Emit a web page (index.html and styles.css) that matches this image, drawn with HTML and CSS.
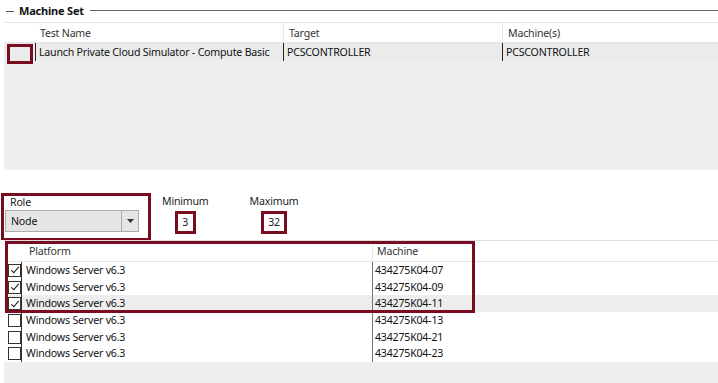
FILE: index.html
```html
<!DOCTYPE html>
<html>
<head>
<meta charset="utf-8">
<link rel="stylesheet" href="styles.css">
</head>
<body>
<div class="page">
  <div class="legend-row">
    <span class="dash"></span>
    <span class="legend">Machine Set</span>
    <span class="rule"></span>
  </div>

  <div class="tgrid">
    <div class="trow thead">
      <div class="c0"></div>
      <div class="c1">Test Name</div>
      <div class="c2">Target</div>
      <div class="c3">Machine(s)</div>
    </div>
    <div class="trow tdata">
      <div class="c0"><span class="mark-box"></span></div>
      <div class="c1">Launch Private Cloud Simulator - Compute Basic</div>
      <div class="c2">PCSCONTROLLER</div>
      <div class="c3">PCSCONTROLLER</div>
    </div>
    <div class="tfill"></div>
  </div>

  <div class="role-section">
    <div class="role-group">
      <div class="lbl">Role</div>
      <div class="combo">
        <span class="combo-text">Node</span>
        <span class="combo-btn"><svg width="7" height="4" viewBox="0 0 7 4"><path d="M0 0h7L3.5 4z" fill="#333"/></svg></span>
      </div>
    </div>
    <div class="num-group">
      <div class="lbl">Minimum</div>
      <div class="num-box">3</div>
    </div>
    <div class="num-group">
      <div class="lbl">Maximum</div>
      <div class="num-box">32</div>
    </div>
  </div>

  <div class="lgrid">
    <div class="hl-box"></div>
    <div class="lrow lhead">
      <div class="k0"></div>
      <div class="k1">Platform</div>
      <div class="k2">Machine</div>
    </div>
    <div class="lrow">
      <div class="k0"><span class="cb checked"></span></div>
      <div class="k1">Windows Server v6.3</div>
      <div class="k2">434275K04-07</div>
    </div>
    <div class="lrow">
      <div class="k0"><span class="cb checked"></span></div>
      <div class="k1">Windows Server v6.3</div>
      <div class="k2">434275K04-09</div>
    </div>
    <div class="lrow sel">
      <div class="k0"><span class="cb checked"></span></div>
      <div class="k1">Windows Server v6.3</div>
      <div class="k2">434275K04-11</div>
    </div>
    <div class="lrow">
      <div class="k0"><span class="cb"></span></div>
      <div class="k1">Windows Server v6.3</div>
      <div class="k2">434275K04-13</div>
    </div>
    <div class="lrow">
      <div class="k0"><span class="cb"></span></div>
      <div class="k1">Windows Server v6.3</div>
      <div class="k2">434275K04-21</div>
    </div>
    <div class="lrow">
      <div class="k0"><span class="cb"></span></div>
      <div class="k1">Windows Server v6.3</div>
      <div class="k2">434275K04-23</div>
    </div>
    <div class="lfill"></div>
  </div>
</div>
</body>
</html>
```

FILE: styles.css
```css
* { box-sizing: border-box; }
html, body { margin: 0; padding: 0; background: #fff; }
body {
  font-family: "Noto Sans", "Open Sans", sans-serif;
  font-size: 10.6px;
  letter-spacing: -0.2px;
  color: #111;
  width: 718px;
  height: 383px;
  overflow: hidden;
}
.page { display: flex; flex-direction: column; }

.legend-row {
  display: flex;
  align-items: center;
  height: 22px;
  padding-left: 6px;
}
.dash { width: 8px; height: 1px; background: #555; margin-right: 5px; }
.legend { font-weight: bold; font-size: 11px; color: #111; margin-right: 6px; line-height: 22px; }
.rule { flex: 1; height: 1px; background: #666; margin-top: -2px; }

.tgrid { margin-left: 4px; display: flex; flex-direction: column; }
.trow { display: grid; grid-template-columns: 31px 248px 219px 1fr; }
.thead {
  height: 21px;
  border-top: 1px solid #e3e3e3;
  border-bottom: 1px solid #e3e3e3;
  background: #fff;
  color: #333;
}
.thead > div { line-height: 20px; padding-left: 5px; }
.thead .c2, .thead .c3 { border-left: 1px solid #e6e6e6; }
.tdata { height: 18px; background: #ebebeb; position: relative; }
.tdata > div { line-height: 18px; padding-left: 3px; white-space: nowrap; }
.tdata .c1, .tdata .c2, .tdata .c3 { border-left: 1px solid #222; }
.tdata .c0 { position: relative; }
.mark-box {
  position: absolute;
  left: 3px;
  top: 1px;
  width: 26px;
  height: 20px;
  border: 3px solid #7a0c1f;
}
.tfill { height: 109px; background: #efefef; }

.role-section {
  display: flex;
  align-items: flex-start;
  margin-top: 23px;
  height: 47px;
}
.lbl { color: #222; line-height: 14px; }
.role-group {
  margin-left: 1px;
  width: 150px;
  height: 47px;
  border: 3px solid #7a0c1f;
  border-bottom-width: 2px;
  padding: 0 0 0 1px;
}
.role-group .lbl { padding-left: 5px; margin-top: -1px; height: 15px; }
.combo {
  margin-top: 0;
  width: 134px;
  height: 22px;
  background: #e5e5e5;
  border: 1px solid #acacac;
  display: flex;
  align-items: center;
}
.combo-text { flex: 1; padding-left: 5px; color: #111; }
.combo-btn {
  width: 17px;
  height: 20px;
  border-left: 1px solid #acacac;
  display: flex;
  align-items: center;
  justify-content: center;
}
.num-group {
  display: flex;
  flex-direction: column;
  align-items: center;
  margin-top: 1px;
}
.num-group:nth-child(2) { margin-left: 11px; }
.num-group:nth-child(3) { margin-left: 41px; }
.num-group .lbl { margin-bottom: 3px; }
.num-box {
  height: 23px;
  min-width: 21px;
  padding: 0 4px;
  border: 3px solid #7a0c1f;
  line-height: 17px;
  text-align: center;
  color: #222;
}

.lgrid {
  position: relative;
  margin-left: 4px;
  display: flex;
  flex-direction: column;
  border-top: 1px solid #dedede;
}
.hl-box {
  position: absolute;
  left: 1px;
  top: 0;
  width: 470px;
  height: 72px;
  border: 3px solid #7a0c1f;
  pointer-events: none;
}
.lrow {
  display: grid;
  grid-template-columns: 18px 350px 1fr;
  height: 16.7px;
}
.lrow > div { line-height: 16px; white-space: nowrap; }
.lhead {
  height: 21px;
  border-bottom: 1px solid #e3e3e3;
  color: #333;
}
.lhead > div { line-height: 20px; }
.lhead .k1 { padding-left: 7px; }
.lhead .k2 { border-left: 1px solid #e6e6e6; padding-left: 4px; }
.lrow:not(.lhead) .k0 { border-right: 1px solid #333; display: flex; align-items: center; padding-left: 4px; }
.lrow:not(.lhead) .k1 { padding-left: 4px; }
.lrow:not(.lhead) .k2 { border-left: 1px solid #777; padding-left: 2px; }
.lrow.sel { background: #ededed; }
.cb {
  display: block;
  width: 13px;
  height: 13px;
  border: 1px solid #333;
  background: #fff;
  position: relative;
}
.cb.checked::after {
  content: "";
  position: absolute;
  left: 3.5px;
  top: 0.5px;
  width: 3px;
  height: 7px;
  border-right: 1.6px solid #111;
  border-bottom: 1.6px solid #111;
  transform: rotate(40deg);
}
.lfill { height: 30px; background: #efefef; }
```
